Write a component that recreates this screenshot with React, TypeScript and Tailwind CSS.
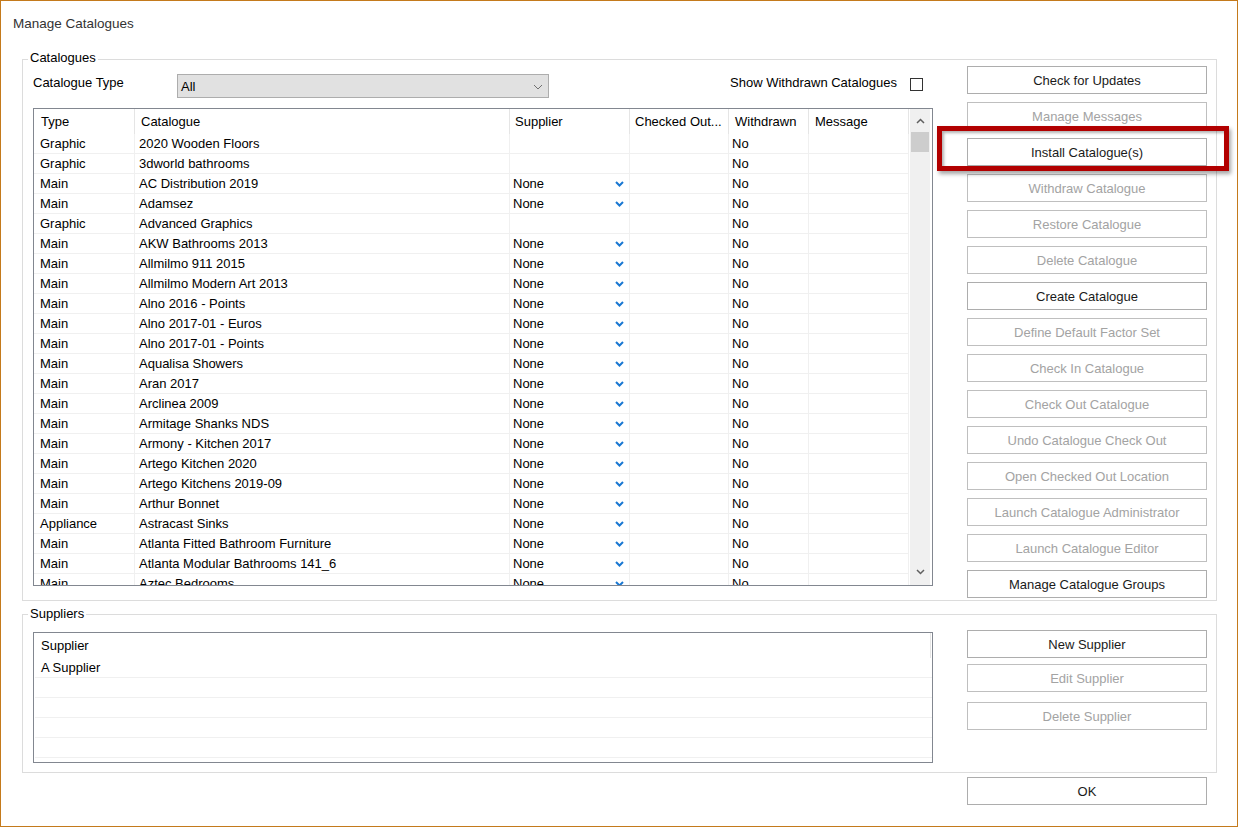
import React from 'react';

type Row = [string, string, boolean];

const catalogues: Row[] = [
  ['Graphic', '2020 Wooden Floors', false],
  ['Graphic', '3dworld bathrooms', false],
  ['Main', 'AC Distribution 2019', true],
  ['Main', 'Adamsez', true],
  ['Graphic', 'Advanced Graphics', false],
  ['Main', 'AKW Bathrooms 2013', true],
  ['Main', 'Allmilmo 911 2015', true],
  ['Main', 'Allmilmo Modern Art 2013', true],
  ['Main', 'Alno 2016 - Points', true],
  ['Main', 'Alno 2017-01 - Euros', true],
  ['Main', 'Alno 2017-01 - Points', true],
  ['Main', 'Aqualisa Showers', true],
  ['Main', 'Aran 2017', true],
  ['Main', 'Arclinea 2009', true],
  ['Main', 'Armitage Shanks NDS', true],
  ['Main', 'Armony - Kitchen 2017', true],
  ['Main', 'Artego Kitchen 2020', true],
  ['Main', 'Artego Kitchens 2019-09', true],
  ['Main', 'Arthur Bonnet', true],
  ['Appliance', 'Astracast Sinks', true],
  ['Main', 'Atlanta Fitted Bathroom Furniture', true],
  ['Main', 'Atlanta Modular Bathrooms 141_6', true],
  ['Main', 'Aztec Bedrooms', true],
];

const buttons: [string, boolean][] = [
  ['Check for Updates', true],
  ['Manage Messages', false],
  ['Install Catalogue(s)', true],
  ['Withdraw Catalogue', false],
  ['Restore Catalogue', false],
  ['Delete Catalogue', false],
  ['Create Catalogue', true],
  ['Define Default Factor Set', false],
  ['Check In Catalogue', false],
  ['Check Out Catalogue', false],
  ['Undo Catalogue Check Out', false],
  ['Open Checked Out Location', false],
  ['Launch Catalogue Administrator', false],
  ['Launch Catalogue Editor', false],
  ['Manage Catalogue Groups', true],
];

function Btn({ label, enabled = true, className = '' }: { label: string; enabled?: boolean; className?: string }) {
  return (
    <div
      className={`h-[28px] w-[240px] flex items-center justify-center pt-[1px] bg-white border ${
        enabled ? 'border-[#adadad] text-[#1a1a1a]' : 'border-[#bfbfbf] text-[#a3a3a3]'
      } ${className}`}
    >
      {label}
    </div>
  );
}

function BlueChevron() {
  return (
    <svg width="9" height="6" viewBox="0 0 9 6">
      <path d="M1 1 L4.5 4.5 L8 1" fill="none" stroke="#1a78d2" strokeWidth="2" />
    </svg>
  );
}

function CatalogueTable() {
  return (
    <div className="w-[900px] h-[478px] border border-[#828790] flex overflow-hidden mt-[10px]">
      <div className="w-[875px] flex flex-col overflow-hidden">
        <div className="h-[25px] flex shrink-0 items-center leading-[16px]">
          <div className="w-[101px] h-full flex items-center pt-[1px] pl-[7px] border-r border-[#e5e5e5]">Type</div>
          <div className="w-[375px] h-full flex items-center pt-[1px] pl-[6px] border-r border-[#e5e5e5]">Catalogue</div>
          <div className="w-[120px] h-full flex items-center pt-[1px] pl-[5px] border-r border-[#e5e5e5]">Supplier</div>
          <div className="w-[99px] h-full flex items-center pt-[1px] pl-[5px] border-r border-[#e5e5e5]">Checked Out...</div>
          <div className="w-[80px] h-full flex items-center pt-[1px] pl-[6px] border-r border-[#e5e5e5]">Withdrawn</div>
          <div className="w-[100px] h-full flex items-center pt-[1px] pl-[6px] border-r border-[#e5e5e5]">Message</div>
        </div>
        {catalogues.map(([type, name, hasSupplier], i) => (
          <div key={i} className="h-[20px] flex shrink-0 border-b border-[#f0f0f0] leading-[20px]">
            <div className="w-[101px] pl-[6px] border-r border-[#f0f0f0]">{type}</div>
            <div className="w-[375px] pl-[4px] border-r border-[#f0f0f0]">{name}</div>
            <div className="w-[120px] pl-[3px] pr-[5px] border-r border-[#f0f0f0] flex items-center justify-between">
              {hasSupplier && (
                <>
                  <span>None</span>
                  <BlueChevron />
                </>
              )}
            </div>
            <div className="w-[99px] border-r border-[#f0f0f0]" />
            <div className="w-[80px] pl-[3px] border-r border-[#f0f0f0]">No</div>
            <div className="w-[100px] border-r border-[#f0f0f0]" />
          </div>
        ))}
      </div>
      <div className="w-[23px] pl-[1px] pr-[2px] h-full">
        <div className="h-full bg-[#f0f0f0] flex flex-col items-center">
          <div className="h-[23px] w-full flex items-center justify-center">
            <svg width="9" height="6" viewBox="0 0 9 6">
              <path d="M1 5 L4.5 1.5 L8 5" fill="none" stroke="#606060" strokeWidth="1.5" />
            </svg>
          </div>
          <div className="h-[20px] w-[18px] bg-[#cdcdcd]" />
          <div className="flex-1" />
          <div className="h-[23px] w-full flex items-center justify-center mb-[2px]">
            <svg width="9" height="6" viewBox="0 0 9 6">
              <path d="M1 1 L4.5 4.5 L8 1" fill="none" stroke="#606060" strokeWidth="1.5" />
            </svg>
          </div>
        </div>
      </div>
    </div>
  );
}

function SupplierList() {
  return (
    <div className="w-[900px] h-[131px] border border-[#828790] overflow-hidden flex flex-col">
      <div className="h-[25px] shrink-0 flex items-center pt-[1px] pl-[7px] border-r border-[#e5e5e5] mr-[1px]">Supplier</div>
      <div className="h-[20px] shrink-0 ml-[1px] border-b border-[#f0f0f0] pl-[6px] leading-[20px]">A Supplier</div>
      {[0, 1, 2, 3, 4].map(i => (
        <div key={i} className="h-[20px] shrink-0 ml-[1px] border-b border-[#f0f0f0]" />
      ))}
    </div>
  );
}

export default function App() {
  return (
    <div className="w-[1238px] h-[827px] border border-[#c47a1c] bg-white relative font-['Liberation_Sans',Arial,sans-serif] text-[13px] text-black leading-[16px]">
      <div className="ml-[12px] mt-[15px] text-[13.5px] text-[#333333]">Manage Catalogues</div>

      {/* Catalogues group */}
      <div className="relative ml-[21px] mt-[27px] w-[1195px] h-[542px] border border-[#dcdcdc] flex">
        <div className="absolute -top-[10px] left-[5px] bg-white px-[2px]">Catalogues</div>
        <div className="pl-[10px] pt-[14px] w-[910px] flex flex-col">
          <div className="h-[24px] flex items-start">
            <div className="w-[144px] mt-[1px]">Catalogue Type</div>
            <div className="w-[372px] h-[24px] bg-[#e1e1e1] border border-[#adadad] flex items-center justify-between pt-[1px] pl-[3px] pr-[5px]">
              <span>All</span>
              <svg width="10" height="6" viewBox="0 0 10 6">
                <path d="M1 1 L5 5 L9 1" fill="none" stroke="#707070" strokeWidth="1" />
              </svg>
            </div>
            <div className="ml-auto flex items-start mr-[10px]">
              <span className="mt-[1px]">Show Withdrawn Catalogues</span>
              <div className="ml-[13px] mt-[4px] w-[13px] h-[13px] border border-[#333333] bg-white" />
            </div>
          </div>
          <CatalogueTable />
        </div>
        <div className="ml-[34px] pt-[6px] flex flex-col gap-[8px]">
          {buttons.map(([label, enabled]) => (
            <Btn key={label} label={label} enabled={enabled} />
          ))}
        </div>
      </div>

      {/* Suppliers group */}
      <div className="relative ml-[21px] mt-[13px] w-[1195px] h-[159px] border border-[#dcdcdc] flex">
        <div className="absolute -top-[9px] left-[5px] bg-white px-[2px]">Suppliers</div>
        <div className="pl-[10px] pt-[17px]">
          <SupplierList />
        </div>
        <div className="ml-[34px] pt-[15px] flex flex-col">
          <Btn label="New Supplier" />
          <Btn label="Edit Supplier" enabled={false} className="mt-[6px]" />
          <Btn label="Delete Supplier" enabled={false} className="mt-[10px]" />
        </div>
      </div>

      <div className="ml-[966px] mt-[4px]">
        <Btn label="OK" />
      </div>

      {/* highlight frame */}
      <div className="absolute left-[936px] top-[125px] w-[292px] h-[45px] border-[5px] border-[#b20000] shadow-[2px_3px_4px_rgba(0,0,0,0.35),inset_2px_2px_3px_rgba(0,0,0,0.3)] pointer-events-none" />
    </div>
  );
}
